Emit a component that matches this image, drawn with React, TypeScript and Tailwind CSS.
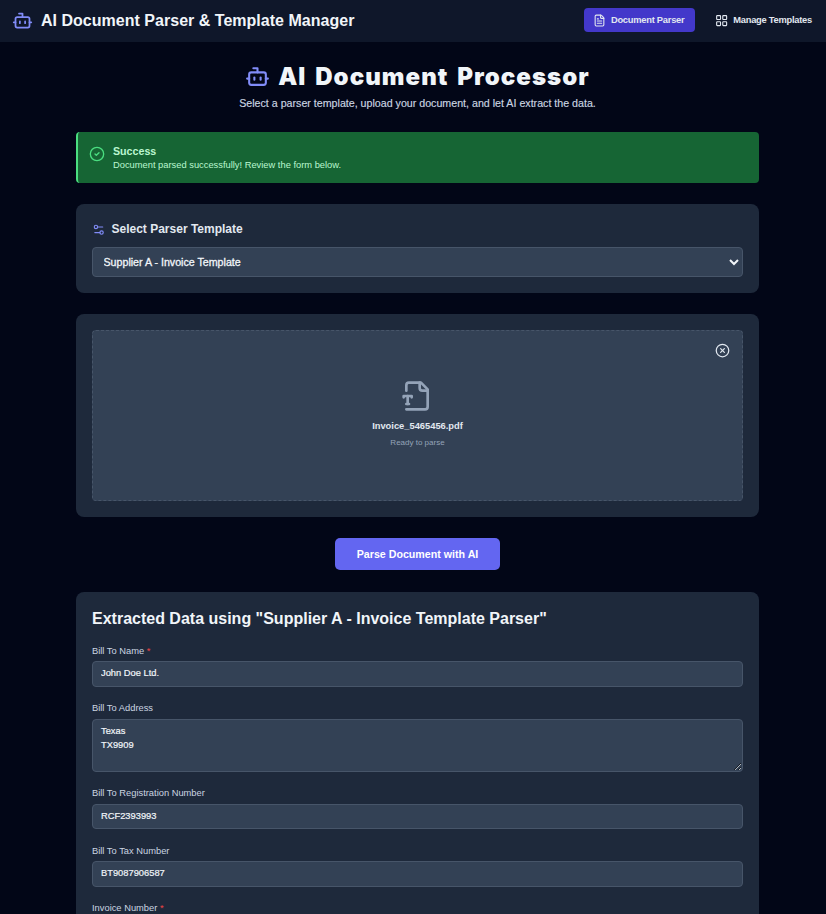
import type { ReactNode } from "react";
import { Bot, CircleCheck, CircleX, FileText, LayoutGrid, Settings2 } from "lucide-react";

function FileTypeIcon() {
  return (
    <svg
      className="mr-[2px] h-8 w-8 text-[#94a3b8]"
      viewBox="0 0 24 24"
      fill="none"
      stroke="currentColor"
      strokeWidth="2"
      strokeLinecap="round"
      strokeLinejoin="round"
    >
      <path d="M4 22h14a2 2 0 0 0 2-2V7l-5-5H6a2 2 0 0 0-2 2v4" />
      <path d="M14 2v4a2 2 0 0 0 2 2h4" />
      <path d="M2 13v-1h6v1" />
      <path d="M5 12v6" />
      <path d="M4 18h2" />
    </svg>
  );
}

function Card({ className, children }: { className: string; children: ReactNode }) {
  return <section className={`rounded-lg bg-[#1e293b] px-4 ${className}`}>{children}</section>;
}

const fieldStyle =
  "block w-full rounded-[4px] border border-[#475569] bg-[#334155] px-2 text-[9.33px] font-medium text-[#f1f5f9] outline-none [-webkit-text-stroke:0.2px_#f1f5f9]";

function Field({
  label,
  required,
  value,
  multiline,
}: {
  label: string;
  required?: boolean;
  value: string;
  multiline?: boolean;
}) {
  return (
    <div>
      <label className="mb-[3px] block h-[13.3px] text-[9.33px] leading-[13.8px] text-[#cbd5e1]">
        {label}
        {required && <span className="text-[#ef4444]"> *</span>}
      </label>
      {multiline ? (
        <textarea
          className={`${fieldStyle} h-[53px] resize-y py-[4px] leading-[14px]`}
          defaultValue={value}
        />
      ) : (
        <input className={`${fieldStyle} h-[25.7px] pb-[1.5px]`} defaultValue={value} />
      )}
    </div>
  );
}

export default function App() {
  return (
    <div className="h-[914px] overflow-hidden bg-[#020617] font-['Liberation_Sans',Arial,sans-serif] text-[#f1f5f9]">
      <header className="flex h-[42px] items-center justify-between bg-[#0f172a] pr-[14px] pl-3">
        <div className="flex items-center gap-2">
          <Bot className="mb-[2px] h-[21px] w-[21px] text-[#818cf8]" />
          <span className="text-[16px] font-bold tracking-[0.02px] whitespace-nowrap">
            AI Document Parser &amp; Template Manager
          </span>
        </div>
        <nav className="mb-[2px] flex items-center gap-[20.5px] text-[9.33px] font-bold tracking-[-0.25px] text-[#e2e8f0]">
          <button className="flex h-6 w-[111px] items-center gap-[4.5px] rounded-[4px] bg-[#4338ca] pl-[9.5px] whitespace-nowrap">
            <FileText className="h-[13px] w-[13px]" />
            <span className="pt-px">Document Parser</span>
          </button>
          <button className="flex items-center gap-[4.5px] whitespace-nowrap">
            <LayoutGrid className="mt-px h-[13.3px] w-[13.3px]" />
            <span className="pt-px">Manage Templates</span>
          </button>
        </nav>
      </header>

      <main className="mr-[67px] ml-[76px] w-[683px]">
        <div className="flex h-[90px] flex-col items-center pt-5">
          <h1 className="flex h-[30px] items-center gap-2 text-[24px] whitespace-nowrap">
            <Bot className="mb-px h-[25px] w-[25px] text-[#818cf8]" />
            <span className="font-['Inter','Liberation_Sans',sans-serif] font-black tracking-[1.05px] [word-spacing:3px]">
              AI Document Processor
            </span>
          </h1>
          <p className="text-[10.67px] leading-[22px] text-[#cbd5e1] [-webkit-text-stroke:0.15px_#cbd5e1]">
            Select a parser template, upload your document, and let AI extract the data.
          </p>
        </div>

        <div className="flex h-[51px] gap-2 rounded-[4px] border-l-2 border-[#4ade80] bg-[#166534] pt-[13px] pl-[11px] text-[#bbf7d0]">
          <CircleCheck className="mt-[1px] h-4 w-4 text-[#4ade80]" />
          <div>
            <p className="text-[10.67px] leading-[13px] font-bold">Success</p>
            <p className="text-[9.33px] leading-[14px]">Document parsed successfully! Review the form below.</p>
          </div>
        </div>

        <Card className="mt-[21px] h-[89px] pt-4">
          <h2 className="flex h-[18px] items-center gap-[6px] text-[12px] font-bold text-[#e2e8f0]">
            <Settings2 className="mt-px h-[13.5px] w-[13.5px] text-[#818cf8]" />
            Select Parser Template
          </h2>
          <select className="mt-[9px] block h-[30px] w-full rounded-[4px] border border-[#475569] bg-[#334155] px-[6.5px] text-[10.67px] font-medium text-[#f1f5f9] [-webkit-text-stroke:0.3px_#f1f5f9]">
            <option>Supplier A - Invoice Template</option>
          </select>
        </Card>

        <Card className="mt-[21px] h-[203px] pt-4">
          <div className="relative flex h-[171px] flex-col items-center rounded-[4px] border border-dashed border-[#475569] bg-[#334155] pt-[49px]">
            <CircleX className="absolute top-[12px] right-[12px] h-[15px] w-[15px] text-[#e2e8f0]" />
            <FileTypeIcon />
            <p className="mt-[7px] text-[9.33px] leading-[14px] font-bold text-[#e2e8f0]">Invoice_5465456.pdf</p>
            <p className="mt-[4px] text-[8px] leading-[11px] text-[#94a3b8]">Ready to parse</p>
          </div>
        </Card>

        <button className="mx-auto mt-[21px] block h-8 w-[165px] rounded-[5px] bg-[#6366f1] text-[10.67px] font-bold text-white">
          Parse Document with AI
        </button>

        <Card className="mt-[22px] h-[360px] pt-4">
          <h2 className="h-[37px] text-[16px] leading-[21px] font-bold whitespace-nowrap">
            Extracted Data using "Supplier A - Invoice Template Parser"
          </h2>
          <div className="flex flex-col gap-[15.5px]">
            <Field label="Bill To Name" required value="John Doe Ltd." />
            <Field label="Bill To Address" multiline value={"Texas\nTX9909"} />
            <Field label="Bill To Registration Number" value="RCF2393993" />
            <Field label="Bill To Tax Number" value="BT9087906587" />
            <Field label="Invoice Number" required value="" />
          </div>
        </Card>
      </main>
    </div>
  );
}
